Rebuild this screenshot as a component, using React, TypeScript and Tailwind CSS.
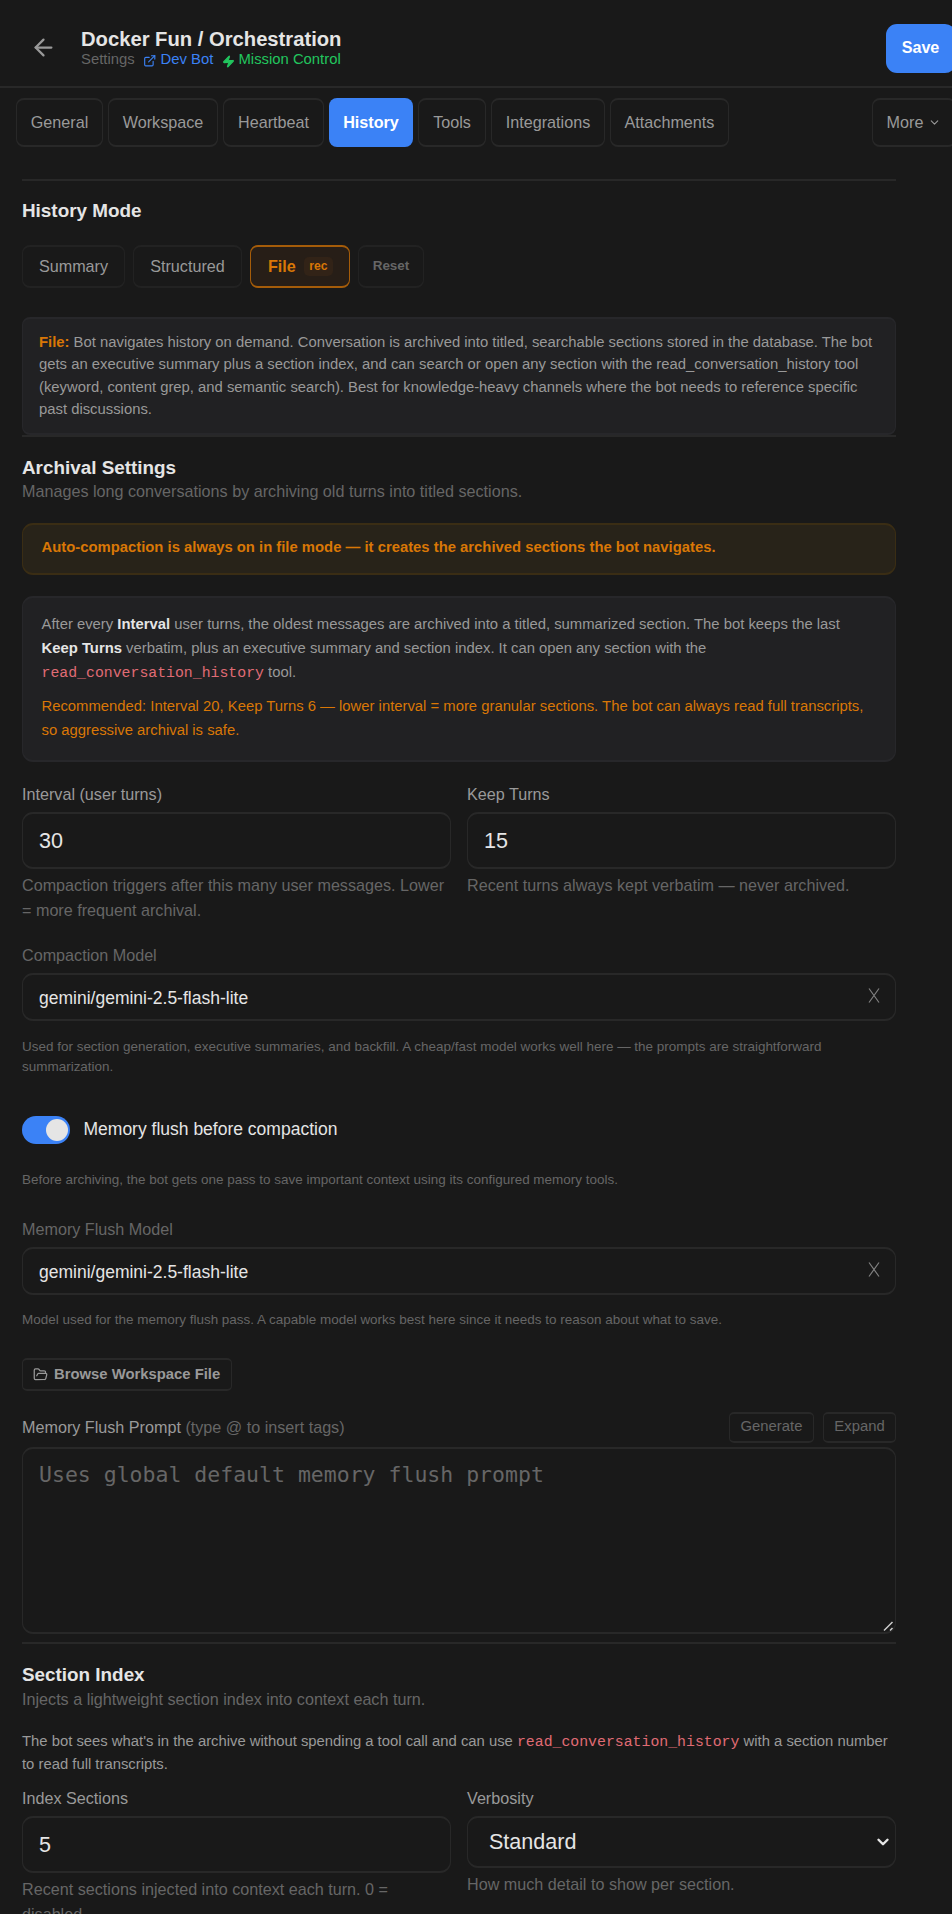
import React from "react";
import { ArrowLeft, ChevronDown, ExternalLink, FolderOpen, Zap } from "lucide-react";

const tabs = [
  { label: "General", w: "w-[87px]" },
  { label: "Workspace", w: "w-[110px]" },
  { label: "Heartbeat", w: "w-[101px]" },
  { label: "History", w: "w-[84px]", active: true },
  { label: "Tools", w: "w-[68px]" },
  { label: "Integrations", w: "w-[114px]" },
  { label: "Attachments", w: "w-[119px]" },
];

function Divider({ className }: { className: string }) {
  return <div className={`h-[2px] shrink-0 bg-[#282828] ${className}`} />;
}

function Title({ className, children }: { className: string; children: React.ReactNode }) {
  return <h2 className={`text-[18.86px] leading-[24px] font-bold text-[#e5e5e5] ${className}`}>{children}</h2>;
}

function Label({ className, children }: { className: string; children: React.ReactNode }) {
  return <div className={`text-[16.17px] leading-[20px] ${className}`}>{children}</div>;
}

function Hint({ className, children }: { className: string; children: React.ReactNode }) {
  return <p className={`text-[13.48px] leading-[20px] whitespace-nowrap text-[#666] ${className}`}>{children}</p>;
}

function NumberField({ label, value, children }: { label: string; value: string; children: React.ReactNode }) {
  return (
    <div className="w-[429px]">
      <Label className="text-[#999]">{label}</Label>
      <div className="mt-[8px] flex h-[57px] items-center rounded-[11px] border border-y-2 border-[#282828] pt-px pl-4 text-[21.56px] text-[#e5e5e5]">
        {value}
      </div>
      <p className="mt-1 text-[16.17px] leading-[25px] whitespace-nowrap text-[#666]">{children}</p>
    </div>
  );
}

function ModelField({ label, className }: { label: string; className: string }) {
  return (
    <div className={className}>
      <Label className="text-[#666]">{label}</Label>
      <div className="mt-[8px] flex h-[48px] items-center justify-between rounded-[11px] border border-y-2 border-[#282828] pr-[15px] pl-4 text-[17.5px] text-[#e5e5e5]">
        <span className="pt-[2px]">gemini/gemini-2.5-flash-lite</span>
        <svg width="12" height="15" viewBox="0 0 12 15" className="mb-[3px]" stroke="#808080" strokeWidth="1.2" fill="none">
          <path d="M1 0.5 11 14.5M11 0.5 1 14.5" />
        </svg>
      </div>
    </div>
  );
}

function Code() {
  return (
    <code className="font-['Liberation_Mono',monospace] leading-none text-[#e06c75]">read_conversation_history</code>
  );
}

export default function App() {
  return (
    <div className="h-[1914px] w-full overflow-hidden bg-[#191919] font-['Liberation_Sans',Arial,sans-serif]">
      <header className="flex h-[88px] w-[956px] items-start border-b-2 border-[#282828]">
        <ArrowLeft className="mt-[34px] ml-[30px] size-[27px] text-[#999]" strokeWidth={2} />
        <div className="mt-[28px] ml-[24px]">
          <h1 className="text-[20.22px] leading-[22px] font-bold text-[#e5e5e5]">Docker Fun / Orchestration</h1>
          <div className="flex h-[18px] items-center text-[14.83px] leading-[18px]">
            <span className="w-[62px] text-[#666]">Settings</span>
            <ExternalLink className="mt-[4px] size-[13.5px] text-[#3b82f6]" strokeWidth={2} />
            <span className="ml-[4px] w-[61px] whitespace-nowrap text-[#3b82f6]">Dev Bot</span>
            <Zap className="mt-[4px] size-[13px] fill-[#22c55e] text-[#22c55e]" />
            <span className="ml-[4px] whitespace-nowrap text-[#22c55e]">Mission Control</span>
          </div>
        </div>
        <button className="mt-[24px] ml-auto h-[49px] w-[70px] rounded-[11px] bg-[#3b82f6] pr-px pb-[2px] text-[16.17px] font-bold text-white">
          Save
        </button>
      </header>

      <nav className="flex w-[956px] gap-[5px] pt-[10px] pl-4">
        {tabs.map((t) => (
          <button
            key={t.label}
            className={`h-[49px] shrink-0 rounded-[8px] pb-[1px] text-[16.17px] ${t.w} ${
              t.active ? "bg-[#3b82f6] font-bold text-white" : "border border-y-2 border-[#282828] text-[#999]"
            }`}
          >
            {t.label}
          </button>
        ))}
        <button className="ml-auto flex h-[49px] w-[84px] items-center justify-center gap-[5px] rounded-[8px] border border-y-2 border-[#282828] pb-[1px] text-[16.17px] text-[#999]">
          More <ChevronDown className="size-[13px]" strokeWidth={2} />
        </button>
      </nav>

      <main className="mt-[32px] ml-[22px] flex w-[874px] flex-col">
        <Divider className="" />
        <Title className="mt-[18px]">History Mode</Title>
        <div className="mt-[22px] flex h-[43px] gap-[8px] text-[16.17px] text-[#999]">
          <button className="w-[103px] rounded-[8px] border border-y-2 border-[#222]">Summary</button>
          <button className="w-[109px] rounded-[8px] border border-y-2 border-[#222]">Structured</button>
          <button className="flex w-[100px] items-center rounded-[8px] border border-y-2 border-[#a55c09] bg-[#271e17] pl-[17px] font-bold text-[#d97706]">
            File
            <span className="ml-[8px] flex h-[19px] w-[29px] items-center justify-center rounded-[5px] bg-[#322317] text-[12.13px]">
              rec
            </span>
          </button>
          <button className="w-[66px] rounded-[8px] border border-y-2 border-[#222] text-[13.48px] font-bold text-[#666]">
            Reset
          </button>
        </div>

        <div className="mt-[29px] h-[118px] rounded-[8px] border border-y-2 border-[#27272a] bg-[#212123] pt-[12px] pl-[16px] text-[14.83px] leading-[22.3px] whitespace-nowrap text-[#999]">
          <b className="text-[#d97706]">File:</b> Bot navigates history on demand. Conversation is archived into titled, searchable
          sections stored in the database. The bot
          <br />
          gets an executive summary plus a section index, and can search or open any section with the read_conversation_history tool
          <br />
          (keyword, content grep, and semantic search). Best for knowledge-heavy channels where the bot needs to reference specific
          <br />
          past discussions.
        </div>
        <Divider className="" />

        <Title className="mt-[19px]">Archival Settings</Title>
        <p className="text-[16.17px] leading-[22px] text-[#666]">
          Manages long conversations by archiving old turns into titled sections.
        </p>
        <div className="mt-[21px] flex h-[52px] items-center rounded-[11px] border border-y-2 border-[#3a2d14] bg-[#282319] pb-[3px] pl-[18.5px] text-[14.83px] font-bold text-[#d97706]">
          Auto-compaction is always on in file mode — it creates the archived sections the bot navigates.
        </div>
        <div className="mt-[21px] h-[166px] rounded-[11px] border border-y-2 border-[#27272a] bg-[#212123] pt-[15px] pl-[18.5px] text-[14.83px] leading-[23.8px] whitespace-nowrap text-[#999]">
          <p>
            After every <b className="text-[#e5e5e5]">Interval</b> user turns, the oldest messages are archived into a titled,
            summarized section. The bot keeps the last
            <br />
            <b className="text-[#e5e5e5]">Keep Turns</b> verbatim, plus an executive summary and section index. It can open any
            section with the
            <br />
            <Code /> tool.
          </p>
          <p className="mt-[11px] text-[#d97706]">
            Recommended: Interval 20, Keep Turns 6 — lower interval = more granular sections. The bot can always read full
            transcripts,
            <br />
            so aggressive archival is safe.
          </p>
        </div>

        <div className="mt-[22px] flex h-[139px] gap-4">
          <NumberField label="Interval (user turns)" value="30">
            Compaction triggers after this many user messages. Lower
            <br />= more frequent archival.
          </NumberField>
          <NumberField label="Keep Turns" value="15">
            Recent turns always kept verbatim — never archived.
          </NumberField>
        </div>

        <ModelField label="Compaction Model" className="mt-[22px]" />
        <Hint className="mt-[16px]">
          Used for section generation, executive summaries, and backfill. A cheap/fast model works well here — the prompts are
          straightforward
          <br />
          summarization.
        </Hint>

        <div className="mt-[39px] flex h-[28px] items-center">
          <div className="flex h-[28px] w-[48px] items-center justify-end rounded-full bg-[#3b82f6] pr-[2.5px]">
            <div className="size-[22px] rounded-full bg-[#e5e5e5]" />
          </div>
          <span className="ml-[13.5px] pb-[2px] text-[17.5px] text-[#e5e5e5]">Memory flush before compaction</span>
        </div>
        <Hint className="mt-[26px]">
          Before archiving, the bot gets one pass to save important context using its configured memory tools.
        </Hint>

        <ModelField label="Memory Flush Model" className="mt-[29px]" />
        <Hint className="mt-[15px]">
          Model used for the memory flush pass. A capable model works best here since it needs to reason about what to save.
        </Hint>

        <button className="mt-[28px] flex h-[33px] w-[210px] items-center rounded-[5px] border border-y-2 border-[#282828] pb-px pl-[10px] text-[14.83px] font-bold whitespace-nowrap text-[#999]">
          <FolderOpen className="mr-[6px] size-[15px]" strokeWidth={2} />
          Browse Workspace File
        </button>

        <div className="mt-[21px] flex h-[31px] items-center gap-[9px]">
          <Label className="mr-auto pb-[2px] text-[#999]">
            Memory Flush Prompt <span className="text-[#666]">(type @ to insert tags)</span>
          </Label>
          <button className="h-[31px] w-[85px] rounded-[5px] border border-y-2 border-[#282828] pb-[2px] text-[14.83px] text-[#666]">
            Generate
          </button>
          <button className="h-[31px] w-[73px] rounded-[5px] border border-y-2 border-[#282828] pb-[2px] text-[14.83px] text-[#666]">
            Expand
          </button>
        </div>
        <div className="relative mt-1 h-[187px] rounded-[11px] border border-y-2 border-[#282828] pt-[11px] pl-4 font-['DejaVu_Sans_Mono',monospace] text-[21.5px] leading-[30px] text-[#666]">
          Uses global default memory flush prompt
          <svg className="absolute right-[1px] bottom-0" width="12" height="12" viewBox="0 0 12 12" stroke="#ccc" strokeWidth="1.5">
            <path d="M2 10.5 10.5 2M8 10.5 10.5 8" />
          </svg>
        </div>

        <Divider className="mt-[8px]" />
        <Title className="mt-[19px]">Section Index</Title>
        <p className="mt-px text-[16.17px] leading-[22px] text-[#666]">
          Injects a lightweight section index into context each turn.
        </p>
        <p className="mt-[20px] text-[14.83px] leading-[23px] whitespace-nowrap text-[#999]">
          The bot sees what's in the archive without spending a tool call and can use <Code /> with a section number
          <br />
          to read full transcripts.
        </p>

        <div className="mt-[12px] flex gap-4">
          <NumberField label="Index Sections" value="5">
            Recent sections injected into context each turn. 0 =<br />
            disabled.
          </NumberField>
          <div className="w-[429px]">
            <Label className="text-[#999]">Verbosity</Label>
            <div className="mt-[8px] flex h-[52px] items-center justify-between rounded-[11px] border border-y-2 border-[#282828] pr-[3px] pl-[21px] text-[21.56px] text-[#e5e5e5]">
              Standard
              <ChevronDown className="mb-px size-[18px]" strokeWidth={3.2} />
            </div>
            <p className="mt-1 text-[16.17px] leading-[25px] text-[#666]">How much detail to show per section.</p>
          </div>
        </div>
      </main>
    </div>
  );
}
